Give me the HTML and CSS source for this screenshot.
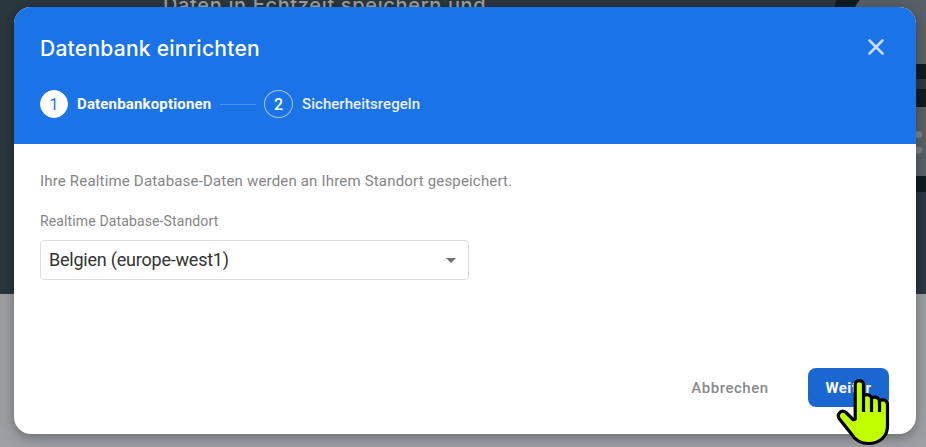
FILE: index.html
```html
<!DOCTYPE html>
<html lang="de">
<head>
<meta charset="utf-8">
<title>Datenbank einrichten</title>
<link rel="stylesheet" href="styles.css">
</head>
<body>
<div class="backdrop">
  <div class="hero">
    <p class="hero-title">Daten in Echtzeit speichern und</p>
    <svg class="hero-art" width="126" height="294" viewBox="0 0 126 294" aria-hidden="true">
      <path d="M36 0h90v192H90V12H34z" fill="#101b22"/>
      <path d="M126 0H60Q55 4 54 12L110 64h16z" fill="#596168"/>
      <path d="M110 79h16v10h-16z" fill="#2b3940"/>
      <path d="M110 107h16v69h-16z" fill="#596168"/>
      <path d="M112 134.500h7M112 150h7" stroke="#808284" stroke-width="6.500" stroke-linecap="round"/>
    </svg>
  </div>
</div>
<main class="dialog">
  <header class="dialog-header">
    <div class="title-row">
      <h1>Datenbank einrichten</h1>
      <svg class="close" width="16" height="16" viewBox="0 0 16 16" role="img" aria-label="Schließen"><path d="M1.500 1.500l13 13m0-13l-13 13"/></svg>
    </div>
    <div class="stepper">
      <span class="step-number active">1</span>
      <span class="step-label current">Datenbankoptionen</span>
      <span class="step-line"></span>
      <span class="step-number">2</span>
      <span class="step-label">Sicherheitsregeln</span>
    </div>
  </header>
  <section class="dialog-body">
    <p class="description">Ihre Realtime Database-Daten werden an Ihrem Standort gespeichert.</p>
    <div class="field-label">Realtime Database-Standort</div>
    <div class="select"><span>Belgien (europe-west1)</span><svg width="10" height="5" viewBox="0 0 10 5"><path d="M0 0h10L5 5z" fill="#707070"/></svg></div>
  </section>
  <footer class="actions">
    <button class="cancel">Abbrechen</button>
    <button class="next">Weiter</button>
  </footer>
</main>
<svg class="pointer" width="54" height="69" viewBox="836 378 54 69" aria-hidden="true">
  <path d="M855.200 419V384.500C855.200 379.200 863.500 379.200 863.500 384.500V396C867 393.500 871 395 871.500 398C875 396 879 397.500 879.500 401C883 398.500 887.500 400.500 887.500 404.500V426C887.500 437 879 443.500 868.500 443.500C861 443.500 855 440 851.500 434L839.500 419C836 414 841.500 409 846 412.500L852.500 419Q854 420.500 855.200 419Z"/>
  <path d="M863.500 396v16M871.500 398v14M879.500 401v11"/>
</svg>
</body>
</html>
```

FILE: styles.css
```css
* { box-sizing: border-box; }
body { margin: 0; width: 926px; height: 447px; overflow: hidden; display: flex; justify-content: center; align-items: flex-start; padding: 7px 10px 0 14px; font-family: Roboto, "Liberation Sans", sans-serif; }
.backdrop { position: absolute; inset: 0; z-index: -1; background: #9c9fa4; }
.hero { height: 294px; background: #2a373e; display: flex; justify-content: space-between; overflow: hidden; }
.hero-title { margin: -7px 0 0 163px; font: 500 20px/24px Inter, sans-serif; letter-spacing: .65px; color: #9ca0a3; white-space: nowrap; }
.hero-art { flex: none; }
.dialog { width: 902px; height: 427px; border-radius: 17px; background: #fff; overflow: hidden; display: flex; flex-direction: column; box-shadow: 0 4px 8px rgba(0,0,0,.2), 0 2px 20px rgba(0,0,0,.14); }
.dialog-header { height: 137px; flex: none; background: #1b73e8; color: #fff; padding: 25px 32px 0 26px; }
.title-row { height: 32px; display: flex; align-items: center; justify-content: space-between; }
h1 { margin: 2px 0 0; font: 500 21px/32px Inter, sans-serif; letter-spacing: .26px; }
.close { stroke: #c6dcf9; stroke-width: 2.600; stroke-linecap: round; fill: none; margin-bottom: 2px; }
.stepper { display: flex; align-items: center; height: 28px; margin-top: 26px; }
.step-number { width: 29px; height: 28px; border: 1px solid #a4c7f6; border-radius: 50%; display: flex; align-items: center; justify-content: center; font-size: 16px; font-weight: 500; }
.step-number.active { width: 28px; background: #fff; color: #1b73e8; border-color: #fff; font-weight: 400; }
.step-label { margin-left: 9px; font-size: 15px; font-weight: 500; letter-spacing: .05px; color: #e8f1fd; white-space: nowrap; }
.step-label.current { width: 134px; font-weight: 700; letter-spacing: .16px; color: #fff; }
.step-line { width: 36px; height: 1px; background: #4b91ed; margin: 0 8px 0 9px; }
.dialog-body { flex: 1; padding: 27px 26px 0; }
.description { margin: 0; font-size: 15px; line-height: 20px; letter-spacing: .18px; color: #858585; }
.field-label { margin-top: 22px; font-size: 14px; line-height: 16px; letter-spacing: .13px; color: #858585; }
.select { width: 429px; height: 40px; margin-top: 11px; border: 1px solid #dedede; border-radius: 4px; padding: 0 12px 0 8px; display: flex; align-items: center; justify-content: space-between; font-size: 18px; letter-spacing: -.22px; color: #333; }
.select span { padding-bottom: 2px; }
.actions { height: 66px; padding: 0 27px 27px 0; display: flex; justify-content: flex-end; align-items: center; }
button { border: 0; padding: 0; height: 39px; font: 500 15px Roboto, sans-serif; background: none; }
.cancel { width: 78px; margin-right: 39px; color: #8a8a8a; letter-spacing: .55px; }
.next { width: 81px; border-radius: 8px; background: #1b67d2; color: #fff; font-weight: 700; letter-spacing: .4px; }
.pointer { position: absolute; left: 836px; top: 378px; fill: #bfff00; stroke: #000; stroke-width: 3.200; stroke-linejoin: round; }
.pointer path + path { fill: none; }
```
